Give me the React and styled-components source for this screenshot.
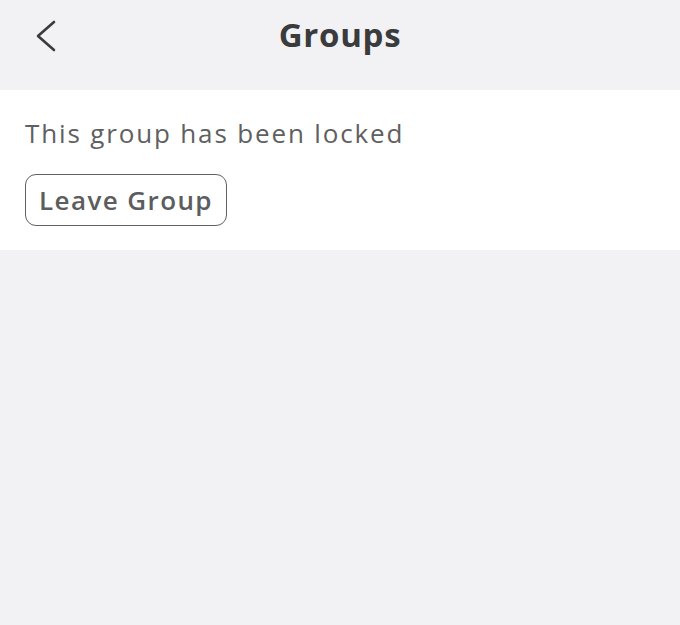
import styled, { createGlobalStyle } from "styled-components"

const Global = createGlobalStyle`
    html, body{
        margin: 0;
        padding: 0;
        background: #f2f2f4;
    }
    body{
        font-family: "Open Sans", "Liberation Sans", sans-serif;
    }
`

const Page = styled.div`
    display: flex;
    flex-direction: column;
    width: 680px;
    min-height: 625px;
    background: #f2f2f4;
`

const Header = styled.div`
    display: grid;
    grid-template-columns: 1fr auto 1fr;
    align-items: start;
    height: 90px;
    box-sizing: border-box;
    .back{
        justify-self: start;
        display: flex;
        margin: 20px 0 0 36px;
        background: none;
        border: none;
        padding: 0;
        cursor: pointer;
    }
    .title{
        padding-top: 12px;
        font-size: 33px;
        line-height: 45px;
        font-weight: 700;
        letter-spacing: 0.7px;
        color: #393b3d;
    }
`

const Panel = styled.div`
    display: flex;
    flex-direction: column;
    align-items: flex-start;
    background: #fff;
    padding: 26px 25px 24px;
    .message{
        font-size: 26px;
        line-height: 34px;
        letter-spacing: 1.85px;
        color: #5f6061;
    }
`

const Button = styled.button`
    margin-top: 24px;
    box-sizing: border-box;
    font-family: inherit;
    font-size: 26px;
    font-weight: 600;
    letter-spacing: 1.4px;
    color: #5c5d5e;
    background: #fff;
    border: 1.5px solid #606162;
    border-radius: 11px;
    height: 52px;
    width: 202px;
    padding: 0;
    cursor: pointer;
`

const Back = () => (
    <svg viewBox="0 0 20 32" width="20" height="32" fill="none">
        <path d="M18 2 L2 16 L18 30" stroke="#393b3d" strokeWidth="2.6" strokeLinecap="round" strokeLinejoin="round"/>
    </svg>
)

const App = () => {
    return (
        <>
            <Global/>
            <Page>
                <Header>
                    <button className="back" aria-label="Back"><Back/></button>
                    <span className="title">Groups</span>
                </Header>
                <Panel>
                    <span className="message">This group has been locked</span>
                    <Button>Leave Group</Button>
                </Panel>
            </Page>
        </>
    )
}
export default App
